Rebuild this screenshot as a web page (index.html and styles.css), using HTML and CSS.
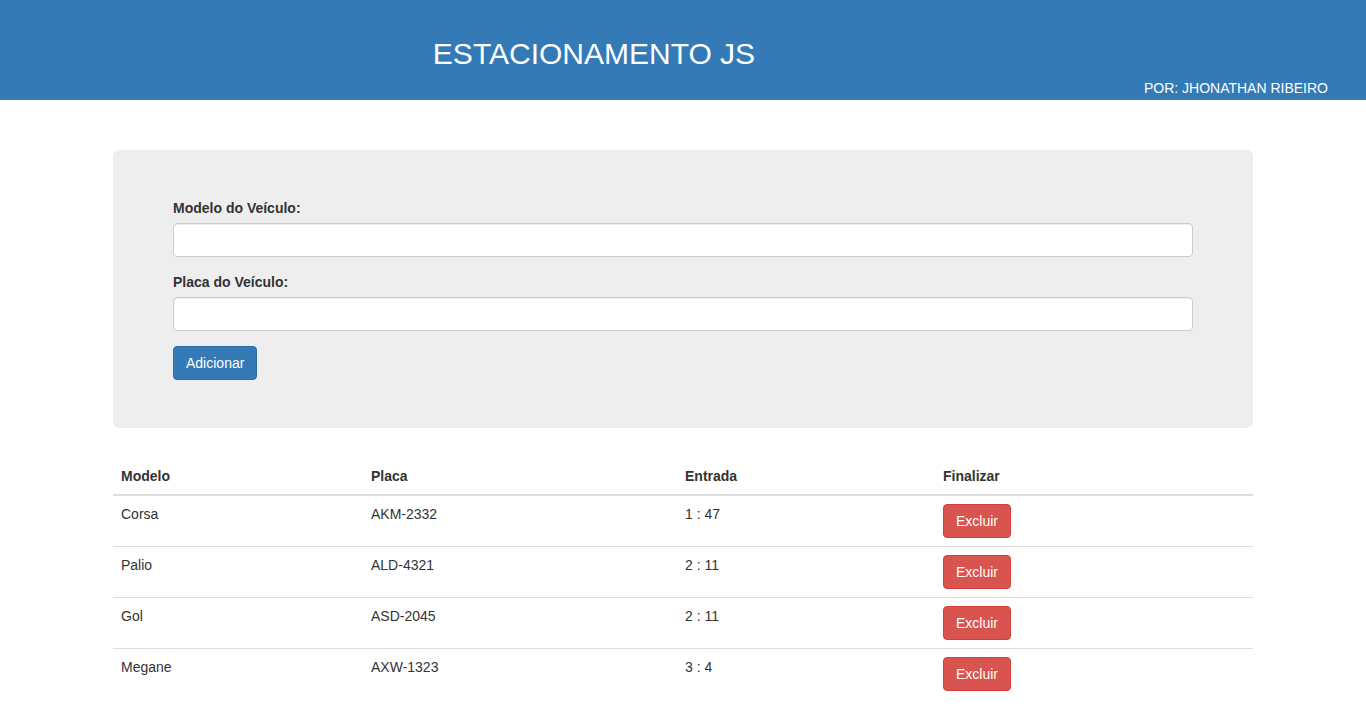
FILE: index.html
```html
<!DOCTYPE html>
<html lang="pt-BR">
<head>
<meta charset="utf-8">
<title>Estacionamento JS</title>
<link rel="stylesheet" href="styles.css">
</head>
<body>
<header class="topbar">
  <h1 class="title">ESTACIONAMENTO JS</h1>
  <div class="author">POR: JHONATHAN RIBEIRO</div>
</header>
<main class="container">
  <section class="jumbotron">
    <form class="form">
      <div class="form-group">
        <label class="label" for="modelo">Modelo do Veículo:</label>
        <input class="input" id="modelo" type="text">
      </div>
      <div class="form-group">
        <label class="label" for="placa">Placa do Veículo:</label>
        <input class="input" id="placa" type="text">
      </div>
      <button type="button" class="btn btn-primary">Adicionar</button>
    </form>
  </section>
  <table class="table">
    <colgroup>
      <col class="c1"><col class="c2"><col class="c3"><col class="c4">
    </colgroup>
    <thead>
      <tr><th>Modelo</th><th>Placa</th><th>Entrada</th><th>Finalizar</th></tr>
    </thead>
    <tbody>
      <tr><td>Corsa</td><td>AKM-2332</td><td>1 : 47</td><td><button type="button" class="btn btn-danger">Excluir</button></td></tr>
      <tr><td>Palio</td><td>ALD-4321</td><td>2 : 11</td><td><button type="button" class="btn btn-danger">Excluir</button></td></tr>
      <tr><td>Gol</td><td>ASD-2045</td><td>2 : 11</td><td><button type="button" class="btn btn-danger">Excluir</button></td></tr>
      <tr><td>Megane</td><td>AXW-1323</td><td>3 : 4</td><td><button type="button" class="btn btn-danger">Excluir</button></td></tr>
    </tbody>
  </table>
</main>
</body>
</html>
```
FILE: styles.css
```css
* { box-sizing: border-box; }
html, body { margin: 0; padding: 0; }
body {
  font-family: "Liberation Sans", Arial, Helvetica, sans-serif;
  font-size: 14px;
  line-height: 20px;
  color: #333;
  background: #fff;
}
.topbar {
  background: #337ab7;
  color: #fff;
  height: 100px;
  display: flex;
  flex-direction: column;
}
.title {
  margin: 0;
  padding-top: 37px;
  font-size: 30px;
  line-height: 34px;
  font-weight: 400;
  text-align: center;
  margin-right: 178px;
}
.author {
  align-self: flex-end;
  padding-right: 38px;
  margin-top: 7px;
  font-size: 14px;
  line-height: 20px;
}
.container {
  width: 1140px;
  margin: 0 auto;
}
.jumbotron {
  margin-top: 50px;
  margin-bottom: 30px;
  background: #eee;
  border-radius: 6px;
  padding: 48px 60px;
}
.form-group { margin-bottom: 15px; }
.label {
  display: block;
  font-weight: 700;
  margin-bottom: 5px;
  line-height: 20px;
}
.input {
  display: block;
  width: 100%;
  height: 34px;
  padding: 6px 12px;
  font: inherit;
  color: #555;
  background: #fff;
  border: 1px solid #ccc;
  border-radius: 4px;
  box-shadow: inset 0 1px 1px rgba(0,0,0,.075);
}
.btn {
  display: inline-block;
  height: 34px;
  padding: 6px 12px;
  font-family: inherit;
  font-size: 14px;
  line-height: 20px;
  border: 1px solid transparent;
  border-radius: 4px;
  color: #fff;
  cursor: pointer;
}
.btn-primary { background: #337ab7; border-color: #2e6da4; }
.btn-danger { background: #d9534f; border-color: #d43f3a; }
.table {
  width: 100%;
  border-collapse: collapse;
  border-spacing: 0;
  margin-top: 1px;
}
.c1 { width: 250px; }
.c2 { width: 314px; }
.c3 { width: 258px; }
.c4 { width: 318px; }
.table th, .table td {
  padding: 8px;
  text-align: left;
  vertical-align: top;
  line-height: 20px;
}
.table th {
  font-weight: 700;
  border-bottom: 2px solid #ddd;
}
.table tbody tr + tr td { border-top: 1px solid #ddd; }
```
